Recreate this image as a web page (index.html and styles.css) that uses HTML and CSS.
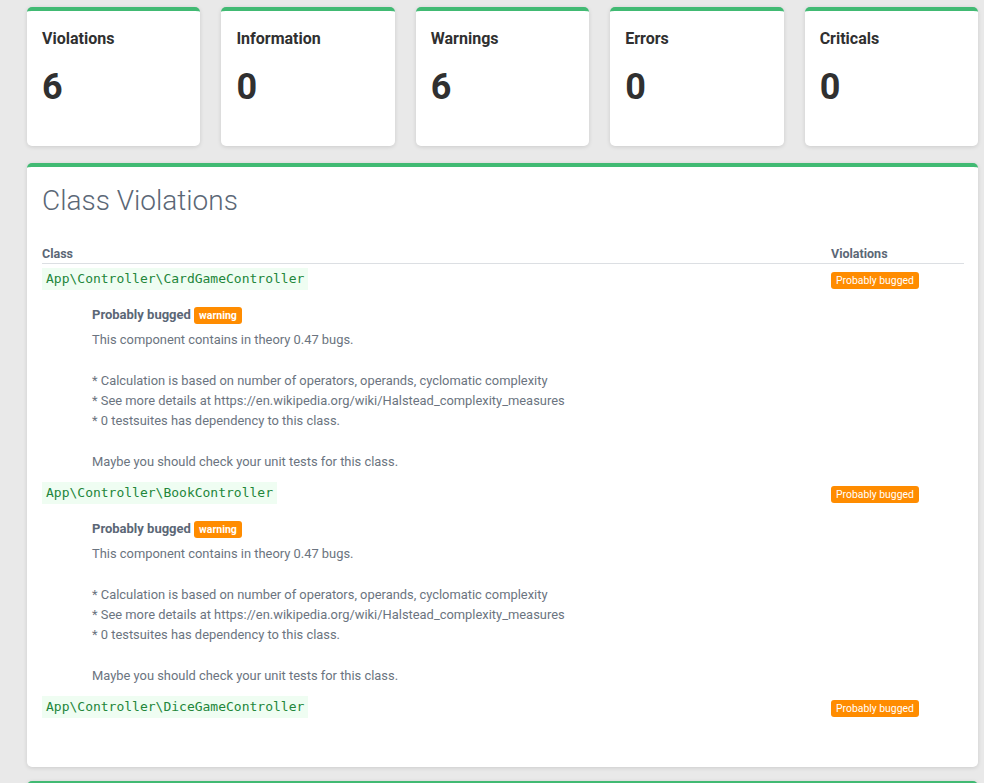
FILE: index.html
```html
<!DOCTYPE html>
<html>
<head>
<meta charset="utf-8">
<link rel="stylesheet" href="styles.css">
</head>
<body>
<div class="page">
  <div class="cards">
    <div class="card"><div class="card-title">Violations</div><div class="card-num">6</div></div>
    <div class="card"><div class="card-title">Information</div><div class="card-num">0</div></div>
    <div class="card"><div class="card-title">Warnings</div><div class="card-num">6</div></div>
    <div class="card"><div class="card-title">Errors</div><div class="card-num">0</div></div>
    <div class="card"><div class="card-title">Criticals</div><div class="card-num">0</div></div>
  </div>

  <div class="panel">
    <h1 class="panel-title">Class Violations</h1>
    <div class="table">
      <div class="thead">
        <div class="col-class">Class</div>
        <div class="col-viol">Violations</div>
      </div>

      <div class="row">
        <div class="col-class"><code class="cls">App\Controller\CardGameController</code></div>
        <div class="col-viol"><span class="badge">Probably bugged</span></div>
      </div>
      <div class="details">
        <div class="det-title">Probably bugged <span class="tag">warning</span></div>
        <div class="det-text">This component contains in theory 0.47 bugs.<br><br>* Calculation is based on number of operators, operands, cyclomatic complexity<br>* See more details at https://en.wikipedia.org/wiki/Halstead_complexity_measures<br>* 0 testsuites has dependency to this class.<br><br>Maybe you should check your unit tests for this class.</div>
      </div>

      <div class="row">
        <div class="col-class"><code class="cls">App\Controller\BookController</code></div>
        <div class="col-viol"><span class="badge">Probably bugged</span></div>
      </div>
      <div class="details">
        <div class="det-title">Probably bugged <span class="tag">warning</span></div>
        <div class="det-text">This component contains in theory 0.47 bugs.<br><br>* Calculation is based on number of operators, operands, cyclomatic complexity<br>* See more details at https://en.wikipedia.org/wiki/Halstead_complexity_measures<br>* 0 testsuites has dependency to this class.<br><br>Maybe you should check your unit tests for this class.</div>
      </div>

      <div class="row row-last">
        <div class="col-class"><code class="cls">App\Controller\DiceGameController</code></div>
        <div class="col-viol"><span class="badge">Probably bugged</span></div>
      </div>
    </div>
  </div>

  <div class="panel panel-next"></div>
</div>
</body>
</html>
```

FILE: styles.css
```css
html, body {
  margin: 0;
  padding: 0;
  background: #e9e9e9;
  font-family: Roboto, "Liberation Sans", sans-serif;
}
.page {
  padding: 7px 6px 0 27px;
  display: flex;
  flex-direction: column;
}
.cards {
  display: flex;
  gap: 21px;
  margin-bottom: 17px;
}
.card {
  flex: 1 1 0;
  height: 135px;
  background: #fff;
  border-top: 4px solid #41ba73;
  border-radius: 5px;
  box-shadow: 0 1px 4px rgba(0,0,0,0.13);
  padding: 0 15px;
  box-sizing: content-box;
}
.card-title {
  margin-top: 18px;
  font-size: 16px;
  font-weight: 700;
  color: #303030;
  line-height: 19px;
}
.card-num {
  margin-top: 18px;
  font-size: 36px;
  font-weight: 700;
  color: #303030;
  line-height: 42px;
}
.panel {
  background: #fff;
  border-top: 4px solid #41ba73;
  border-radius: 5px;
  box-shadow: 0 1px 4px rgba(0,0,0,0.13);
  padding: 17px 14px 45px 15px;
  margin-bottom: 14px;
}
.panel-title {
  margin: 0;
  font-size: 28px;
  font-weight: 300;
  color: #5b6776;
  line-height: 34px;
}
.table {
  margin-top: 28px;
}
.thead {
  display: flex;
  border-bottom: 1px solid #dcdfe3;
  font-size: 12.5px;
  font-weight: 700;
  color: #5b6776;
  line-height: 15px;
  padding-bottom: 2px;
}
.col-class {
  flex: 1 1 auto;
}
.col-viol {
  width: 133px;
  flex: 0 0 133px;
}
.row {
  display: flex;
  align-items: center;
  height: 30px;
}
.cls {
  font-family: "DejaVu Sans Mono", monospace;
  font-size: 13px;
  color: #22863a;
  background: #effdf2;
  padding: 3px 4px;
  line-height: 16px;
  display: inline-block;
}
.badge {
  display: inline-block;
  background: #ff8c00;
  color: #fff;
  font-size: 10.4px;
  line-height: 17px;
  padding: 0 5px;
  border-radius: 3px;
}
.details {
  padding: 10px 0 6px 50px;
}
.det-title {
  font-size: 13px;
  font-weight: 700;
  color: #5b6776;
  line-height: 22px;
  margin-bottom: 4px;
}
.tag {
  display: inline-block;
  background: #ff8c00;
  color: #fff;
  font-size: 10.5px;
  font-weight: 700;
  line-height: 17px;
  padding: 0 5px;
  border-radius: 3px;
}
.det-text {
  font-size: 12.9px;
  color: #6b7480;
  line-height: 20.3px;
}
.panel-next {
  height: 40px;
  padding: 0;
}
```
